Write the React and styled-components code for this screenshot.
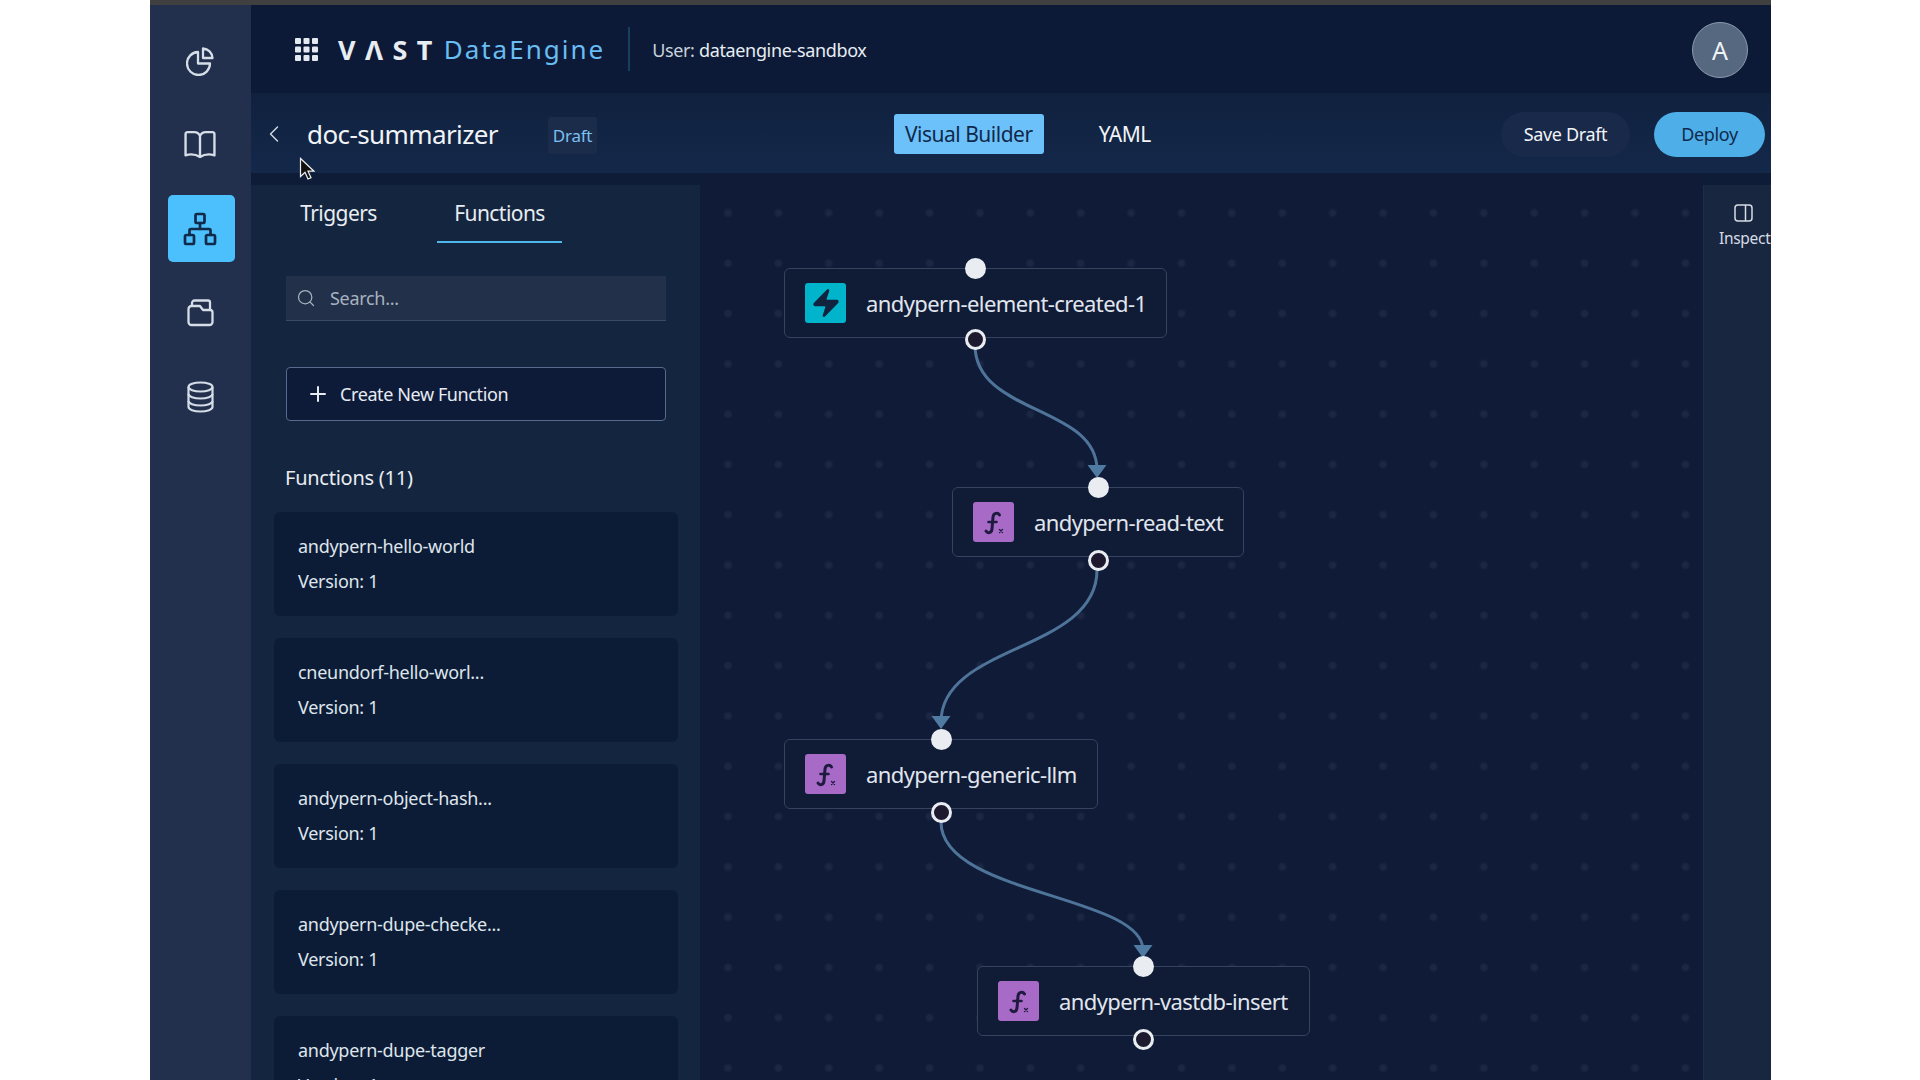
import React from "react";
import styled, { createGlobalStyle } from "styled-components";
import { Network, Plus, Search, ChevronLeft, Zap } from "lucide-react";

const Global = createGlobalStyle`
  html, body { margin: 0; padding: 0; background: #fff; }
  * { box-sizing: border-box; }
  body { font-family: "Noto Sans", "Open Sans", sans-serif; overflow: hidden; }
`;

const Page = styled.div`
  width: 1920px;
  height: 1080px;
  padding: 0 149px 0 150px;
  overflow: hidden;
`;
const Window = styled.div`
  position: relative;
  height: 100%;
  display: flex;
  flex-direction: column;
  background: #0f1c38;
  color: #e6ebf2;
`;
const TopStrip = styled.div`
  height: 5px;
  flex: none;
  background: #404040;
`;
const Body = styled.div`
  flex: 1;
  min-height: 0;
  display: flex;
`;
const Rail = styled.nav`
  width: 101px;
  flex: none;
  background: #222f4d;
  display: flex;
  flex-direction: column;
  align-items: center;
  gap: 17px;
  padding: 22px 0 0 1px;
`;
const RailItem = styled.div`
  width: 67px;
  height: 67px;
  border-radius: 5px;
  padding: 1px 2px 0 0;
  display: flex;
  align-items: center;
  justify-content: center;
  background: ${(p) => (p.$active ? "#4cc0fd" : "transparent")};
  color: ${(p) => (p.$active ? "#11294a" : "#d5dde6")};
`;
const Main = styled.div`
  flex: 1;
  min-width: 0;
  display: flex;
  flex-direction: column;
`;
const Header = styled.header`
  height: 88px;
  flex: none;
  background: #0c1a38;
  display: flex;
  align-items: center;
  padding: 0 23px 0 44px;
`;
const LogoMark = styled.span`
  margin-left: 20px;
  font-size: 27px;
  font-weight: 700;
  letter-spacing: 9.4px;
  color: #e8edf2;
  line-height: 1;
`;
const LogoProduct = styled.span`
  margin-left: 2px;
  font-size: 26px;
  letter-spacing: 2px;
  color: #69bdf2;
  line-height: 1;
`;
const Divider = styled.div`
  width: 2px;
  height: 44px;
  margin: 0 22px 0 23px;
  background: #17405f;
`;
const UserLine = styled.div`
  font-size: 18px;
  letter-spacing: -0.35px;
  margin-top: 2px;
  color: #c9d1dc;
  b { font-weight: 400; color: #e8edf2; }
`;
const Avatar = styled.div`
  margin: 2px 0 0 auto;
  width: 56px;
  height: 56px;
  border-radius: 50%;
  background: #566880;
  border: 1.5px solid #8b9bb0;
  display: flex;
  align-items: center;
  justify-content: center;
  font-size: 25px;
  color: #f0f3f6;
`;
const SubHeader = styled.div`
  height: 80px;
  flex: none;
  display: flex;
  align-items: center;
  padding: 0 6px 0 9px;
  background: linear-gradient(#10213e, #14284a);
`;
const Back = styled.div`
  width: 28px;
  display: flex;
  color: #d5dce5;
  margin-top: 1px;
`;
const Title = styled.h1`
  margin: 2px 0 0 19px;
  width: 241px;
  font-size: 26px;
  font-weight: 400;
  letter-spacing: -0.6px;
  color: #f1f4f7;
`;
const Badge = styled.div`
  width: 49px;
  height: 37px;
  border-radius: 3px;
  background: #1b2c4b;
  color: #7cc0f2;
  font-size: 17px;
  letter-spacing: -0.2px;
  display: flex;
  align-items: center;
  justify-content: center;
  margin-top: 5px;
`;
const ModeTab = styled.div`
  height: 40px;
  border-radius: 3px;
  padding: 0 11px;
  display: flex;
  align-items: center;
  font-size: 21px;
  letter-spacing: -0.5px;
  background: ${(p) => (p.$active ? "#6cc1fb" : "transparent")};
  color: ${(p) => (p.$active ? "#10294a" : "#f1f4f7")};
`;
const Modes = styled.div`
  display: flex;
  gap: 44px;
  margin-left: 297px;
  margin-top: 2px;
`;
const Actions = styled.div`
  margin-left: auto;
  display: flex;
  gap: 24px;
  margin-top: 2px;
`;
const ActionButton = styled.div`
  height: 45px;
  border-radius: 23px;
  display: flex;
  align-items: center;
  justify-content: center;
  font-size: 18px;
  letter-spacing: -0.35px;
  width: ${(p) => (p.$primary ? "111px" : "129px")};
  background: ${(p) => (p.$primary ? "#4eaee8" : "#19294a")};
  color: ${(p) => (p.$primary ? "#0f2a4d" : "#f1f4f7")};
`;
const Content = styled.div`
  flex: 1;
  min-height: 0;
  display: flex;
`;
const Panel = styled.aside`
  width: 449px;
  flex: none;
  margin-top: 12px;
  background: #14263f;
  overflow: hidden;
  padding-left: 35px;
`;
const TabRow = styled.div`
  display: flex;
  gap: 36px;
  margin-left: -10px;
`;
const PanelTab = styled.div`
  width: 125px;
  height: 58px;
  line-height: 56px;
  text-align: center;
  font-size: 21px;
  letter-spacing: -0.55px;
  color: #e9edf2;
  border-bottom: 2.5px solid ${(p) => (p.$active ? "#4fb6ec" : "transparent")};
`;
const SearchBox = styled.div`
  margin-top: 33px;
  width: 380px;
  height: 45px;
  background: #233049;
  border-bottom: 1px solid #3c4a63;
  display: flex;
  align-items: center;
  gap: 14px;
  padding-left: 10px;
  font-size: 18px;
  letter-spacing: -0.3px;
  color: #a7b2c0;
`;
const CreateButton = styled.div`
  margin-top: 46px;
  width: 380px;
  height: 54px;
  background: #0d1a38;
  border: 1px solid #566b8c;
  border-radius: 4px;
  display: flex;
  align-items: center;
  gap: 10px;
  padding-left: 19px;
  font-size: 18px;
  letter-spacing: -0.4px;
  color: #e6ebf2;
`;
const SectionTitle = styled.div`
  margin: 42px 0 19px -1px;
  line-height: 30px;
  font-size: 20px;
  letter-spacing: -0.25px;
  color: #e9edf2;
`;
const CardList = styled.div`
  margin-left: -12px;
  width: 404px;
  display: flex;
  flex-direction: column;
  gap: 22px;
`;
const Card = styled.div`
  height: 104px;
  flex: none;
  background: #0d1c36;
  border-radius: 6px;
  padding: 21px 24px 0;
  display: flex;
  flex-direction: column;
  gap: 9px;
  font-size: 18px;
  line-height: 26px;
  letter-spacing: -0.28px;
  color: #dfe5ec;
`;
const Canvas = styled.main`
  position: relative;
  flex: 1;
  min-width: 0;
  overflow: hidden;
  background-color: #0f1b37;
  background-image: radial-gradient(circle, #1b2743 2.5px, transparent 5px);
  background-size: 50.4px 50.3px;
  background-position: 2.8px 14.85px;
`;
const EdgeLayer = styled.svg`
  position: absolute;
  inset: 0;
  width: 100%;
  height: 100%;
`;
const FlowNode = styled.div`
  position: absolute;
  left: ${(p) => p.$x - 700}px;
  top: ${(p) => p.$y - 173}px;
  width: ${(p) => p.$w}px;
  height: 70px;
  background: #101b36;
  border: 1px solid #34435f;
  border-radius: 6px;
  display: flex;
  align-items: center;
  gap: 20px;
  padding-left: 20px;
  font-size: 22px;
  letter-spacing: -0.6px;
  color: #e1e6ee;
  white-space: nowrap;
`;
const NodeName = styled.span`
  margin-top: -1px;
`;
const NodeIcon = styled.div`
  width: 41px;
  height: 40px;
  flex: none;
  border-radius: 3px;
  background: ${(p) => (p.$kind === "trigger" ? "#00b4cb" : "#a76bc7")};
  display: flex;
  align-items: center;
  justify-content: center;
`;
const Port = styled.span`
  position: absolute;
  left: 50%;
  width: 21px;
  height: 21px;
  margin-left: -10.5px;
  border-radius: 50%;
  ${(p) =>
    p.$in
      ? "top: -11px; background: #e9edf1;"
      : `bottom: ${p.$tight ? -13 : -15}px; background: #1d1a30; border: 3px solid #e9edf1;`}
`;
const InspectPanel = styled.aside`
  width: 68px;
  flex: none;
  margin-top: 12px;
  background: #19263f;
  border-left: 1px solid #1e2c48;
  display: flex;
  flex-direction: column;
  padding-top: 19px;
  gap: 5px;
  font-size: 15.5px;
  letter-spacing: -0.3px;
  color: #d5dce5;
  overflow: hidden;
`;
const InspectIconSlot = styled.div`
  margin-left: 30px;
  display: flex;
`;
const InspectLabel = styled.span`
  margin-left: 15px;
  white-space: nowrap;
  line-height: 22px;
`;
const Cursor = styled.svg`
  position: absolute;
  left: 149px;
  top: 157px;
`;

const PieIcon = () => (
  <svg width="28" height="29" viewBox="0 0 28 29" fill="none" stroke="currentColor" strokeWidth="2.300" strokeLinejoin="round">
    <path d="M12 5A11.500 11.500 0 1 0 24 16.500H12Z" />
    <path d="M17 1.500A10 10 0 0 1 26.500 11H17Z" />
  </svg>
);
const BookIcon = () => (
  <svg width="32" height="30" viewBox="0 0 31 28" fill="none" stroke="currentColor" strokeWidth="2.300" strokeLinejoin="round" strokeLinecap="round">
    <path d="M15.500 5C14 2 12 1.500 10 1.500H3.500a2 2 0 0 0-2 2V24c3-1 9-1.500 14 1.500c5-3 11-2.500 14-1.500V3.500a2 2 0 0 0-2-2H21C19 1.500 17 2 15.500 5Z" />
    <path d="M15.500 5v20.500" />
  </svg>
);
const FolderIcon = () => (
  <svg width="27" height="28" viewBox="0 0 27 28" fill="none" stroke="currentColor" strokeWidth="2.300" strokeLinejoin="round">
    <path d="M1.500 10a3 3 0 0 1 3-3H13l3 4H23a2.500 2.500 0 0 1 2.500 2.500V23a3 3 0 0 1-3 3H4.500a3 3 0 0 1-3-3Z" />
    <path d="M5 7V4a2.500 2.500 0 0 1 2.500-2.500H21a2 2 0 0 1 2 2V11" />
  </svg>
);
const DbIcon = () => (
  <svg width="27" height="32" viewBox="0 0 27 32" fill="none" stroke="currentColor" strokeWidth="2.200">
    <ellipse cx="13.500" cy="6" rx="12" ry="4.500" />
    <path d="M1.500 6V26c0 2.500 5.400 4.500 12 4.500s12-2 12-4.500V6" />
    <path d="M1.500 13c0 2.500 5.400 4.500 12 4.500s12-2 12-4.500" />
    <path d="M1.500 20c0 2.500 5.400 4.500 12 4.500s12-2 12-4.500" />
  </svg>
);
const GridIcon = () => (
  <svg width="23" height="23" viewBox="0 0 23 23" fill="#e4e9ef">
    {[0, 8.500, 17].map((y) =>
      [0, 8.500, 17].map((x) => <rect key={`${x}-${y}`} x={x} y={y} width="6" height="6" rx="1" />)
    )}
  </svg>
);
const FxIcon = () => (
  <svg width="40" height="40" viewBox="0 0 40 40" fill="none" stroke="#1f1a3f" strokeLinecap="round">
    <path d="M25.500 13c-1.500-2.500-6-2.500-6.500 2l-1 12c-.5 4.500-4.500 4.500-6 2" strokeWidth="3" />
    <path d="M14.500 20h8" strokeWidth="2.600" />
    <path d="M25.500 27.500l3 3M28.500 27.500l-3 3" strokeWidth="1.300" />
  </svg>
);
const PanelIcon = () => (
  <svg width="19" height="18" viewBox="0 0 19 18" fill="none" stroke="currentColor" strokeWidth="1.500">
    <rect x="1" y="1" width="17" height="16" rx="3" />
    <path d="M11.500 1v16" />
  </svg>
);

const rail = [
  { id: "pie", icon: <PieIcon /> },
  { id: "book", icon: <BookIcon /> },
  { id: "flow", icon: <Network size={36} strokeWidth={1.800} />, active: true },
  { id: "folder", icon: <FolderIcon /> },
  { id: "db", icon: <DbIcon /> },
];
const functions = [
  "andypern-hello-world",
  "cneundorf-hello-worl...",
  "andypern-object-hash...",
  "andypern-dupe-checke...",
  "andypern-dupe-tagger",
];
const nodes = [
  { name: "andypern-element-created-1", kind: "trigger", x: 784, y: 268, w: 383, tight: true },
  { name: "andypern-read-text", kind: "fn", x: 952, y: 487, w: 292 },
  { name: "andypern-generic-llm", kind: "fn", x: 784, y: 739, w: 314 },
  { name: "andypern-vastdb-insert", kind: "fn", x: 977, y: 966, w: 333 },
];
const edges = [
  { d: "M975 345C975 415 1097 405 1097 470", ax: 1097, ay: 465 },
  { d: "M1097 570C1097 652 941 644 941 722", ax: 941, ay: 716 },
  { d: "M941 822C941 895 1143 895 1143 950", ax: 1143, ay: 945 },
];

export default function App() {
  return (
    <Page>
      <Global />
      <Window>
        <TopStrip />
        <Body>
          <Rail>
            {rail.map((r) => (
              <RailItem key={r.id} $active={r.active}>{r.icon}</RailItem>
            ))}
          </Rail>
          <Main>
            <Header>
              <GridIcon />
              <LogoMark>VΛST</LogoMark>
              <LogoProduct>DataEngine</LogoProduct>
              <Divider />
              <UserLine>User: <b>dataengine-sandbox</b></UserLine>
              <Avatar>A</Avatar>
            </Header>
            <SubHeader>
              <Back><ChevronLeft size={32} strokeWidth={1.200} /></Back>
              <Title>doc-summarizer</Title>
              <Badge>Draft</Badge>
              <Modes>
                <ModeTab $active>Visual Builder</ModeTab>
                <ModeTab>YAML</ModeTab>
              </Modes>
              <Actions>
                <ActionButton>Save Draft</ActionButton>
                <ActionButton $primary>Deploy</ActionButton>
              </Actions>
            </SubHeader>
            <Content>
              <Panel>
                <TabRow>
                  <PanelTab>Triggers</PanelTab>
                  <PanelTab $active>Functions</PanelTab>
                </TabRow>
                <SearchBox>
                  <Search size={20} strokeWidth={1.500} />
                  Search...
                </SearchBox>
                <CreateButton>
                  <Plus size={24} strokeWidth={2} />
                  Create New Function
                </CreateButton>
                <SectionTitle>Functions (11)</SectionTitle>
                <CardList>
                  {functions.map((f) => (
                    <Card key={f}>
                      <span>{f}</span>
                      <span>Version: 1</span>
                    </Card>
                  ))}
                </CardList>
              </Panel>
              <Canvas>
                <EdgeLayer>
                  <g transform="translate(-700 -173)">
                    {edges.map((e) => (
                      <g key={e.d}>
                        <path d={e.d} fill="none" stroke="#4f7499" strokeWidth="3" />
                        <polygon points={`${e.ax - 9.500},${e.ay} ${e.ax + 9.500},${e.ay} ${e.ax},${e.ay + 13}`} fill="#4f7ba3" />
                      </g>
                    ))}
                  </g>
                </EdgeLayer>
                {nodes.map((n) => (
                  <FlowNode key={n.name} $x={n.x} $y={n.y} $w={n.w}>
                    <Port $in />
                    <NodeIcon $kind={n.kind}>
                      {n.kind === "trigger" ? <Zap size={32} fill="#11233f" color="#11233f" strokeWidth={1} /> : <FxIcon />}
                    </NodeIcon>
                    <NodeName>{n.name}</NodeName>
                    <Port $tight={n.tight} />
                  </FlowNode>
                ))}
              </Canvas>
              <InspectPanel>
                <InspectIconSlot><PanelIcon /></InspectIconSlot>
                <InspectLabel>Inspect</InspectLabel>
              </InspectPanel>
            </Content>
          </Main>
        </Body>
        <Cursor width="16" height="24" viewBox="0 0 16 24">
          <path d="M1.500 1.500v18l4.500-4.200 3 6.700 3-1.300-3-6.500h6z" fill="#111" stroke="#eee" strokeWidth="1.200" />
        </Cursor>
      </Window>
    </Page>
  );
}
